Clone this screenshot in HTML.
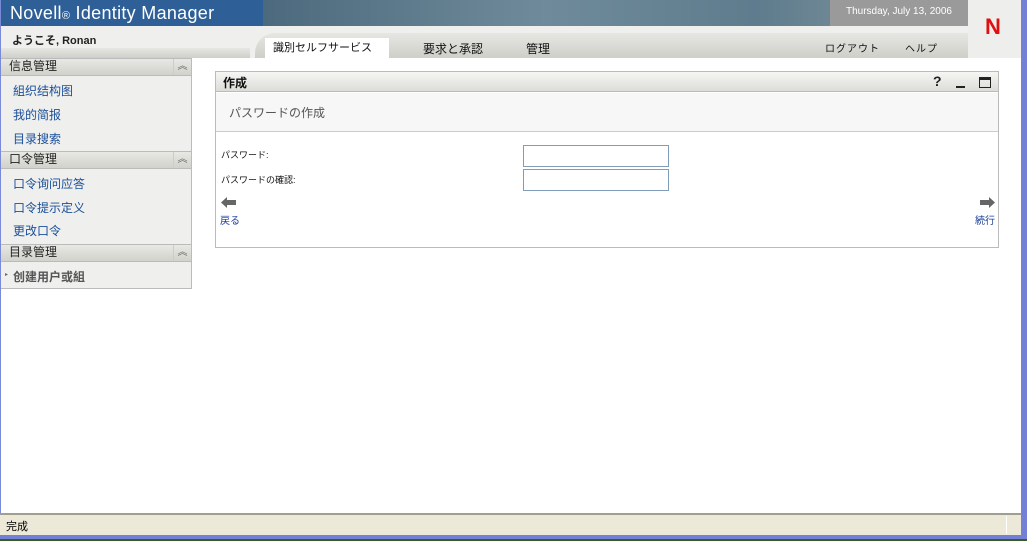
<!DOCTYPE html>
<html><head><meta charset="utf-8"><style>
*{margin:0;padding:0;box-sizing:border-box}
body{width:1027px;height:541px;overflow:hidden;background:#fff;font-family:"Liberation Sans","Noto Sans CJK JP",sans-serif;position:relative}
.abs{position:absolute}
.cjk{font-family:"Liberation Sans","Noto Sans CJK SC",sans-serif}
.sech{background:linear-gradient(#e8e8e4,#d2d2cc);border-top:1px solid #bbb;border-bottom:1px solid #bbb;height:18px;font-size:12px;line-height:15px;color:#222;padding:0 0 0 8px;position:absolute;left:1px;width:190px}
.sech .c{position:absolute;right:0;top:0;width:18px;height:16px;border-left:1px solid #ccc;font-size:10px;color:#666;text-align:center;line-height:16px}
.lnk{position:absolute;left:13px;font-size:12px;color:#1a4f9a}
</style></head><body>
<div class="abs" style="left:0;top:0;width:263px;height:26px;background:#2e5f97"></div>
<div class="abs" style="left:263px;top:0;width:705px;height:26px;background:linear-gradient(90deg,#4c6a7d,#6f8b9b 40%,#5e7c8d 70%,#8a9aa2)"></div>
<div class="abs" style="left:830px;top:0;width:138px;height:26px;background:#9a9a9a"></div>
<div class="abs" style="left:10px;top:3px;font-size:18px;color:#fff;letter-spacing:0.3px">Novell<span style="font-size:11px">®</span> Identity Manager</div>
<div class="abs" style="left:846px;top:6px;font-size:10px;color:#fff">Thursday, July 13, 2006</div>
<div class="abs" style="left:968px;top:0;width:53px;height:58px;background:#eeeeec"></div>
<div class="abs" style="left:985px;top:14px;font-size:22px;font-weight:bold;color:#e01010">N</div>
<div class="abs" style="left:0;top:26px;width:968px;height:32px;background:#efefed"></div>
<div class="abs" style="left:255px;top:33px;width:713px;height:25px;background:linear-gradient(#e6e6e2,#cfcfca);border-radius:20px 0 0 0"></div>
<div class="abs" style="left:0;top:48px;width:250px;height:10px;background:linear-gradient(#e6e6e2,#cfcfca)"></div>
<div class="abs" style="left:12px;top:32px;font-size:11px;font-weight:bold;color:#222">ようこそ, Ronan</div>
<div class="abs" style="left:265px;top:38px;width:124px;height:20px;background:#fff"></div>
<div class="abs" style="left:273px;top:39px;font-size:11px;color:#111">識別セルフサービス</div>
<div class="abs" style="left:423px;top:40px;font-size:12px;color:#111">要求と承認</div>
<div class="abs" style="left:526px;top:40px;font-size:12px;color:#111">管理</div>
<div class="abs" style="left:825px;top:40px;font-size:10px;color:#111;letter-spacing:1px">ログアウト</div>
<div class="abs" style="left:905px;top:40px;font-size:10px;color:#111;letter-spacing:1px">ヘルプ</div>
<div class="abs" style="left:1px;top:58px;width:191px;height:231px;background:#efefed;border-right:1px solid #bbb;border-bottom:1px solid #bbb"></div>
<div class="sech cjk" style="top:58px">信息管理<span class="c">︽</span></div>
<div class="lnk cjk" style="top:82px">組织结构图</div>
<div class="lnk cjk" style="top:106px">我的简报</div>
<div class="lnk cjk" style="top:130px">目录搜索</div>
<div class="sech cjk" style="top:151px">口令管理<span class="c">︽</span></div>
<div class="lnk cjk" style="top:175px">口令询问应答</div>
<div class="lnk cjk" style="top:199px">口令提示定义</div>
<div class="lnk cjk" style="top:222px">更改口令</div>
<div class="sech cjk" style="top:244px">目录管理<span class="c">︽</span></div>
<div class="abs" style="left:5px;top:271px;font-size:6px;color:#666">▸</div>
<div class="abs cjk" style="left:13px;top:268px;font-size:12px;font-weight:bold;color:#555">创建用户或組</div>
<div class="abs" style="left:215px;top:71px;width:784px;height:177px;border:1px solid #bbb;background:#fff"></div>
<div class="abs" style="left:216px;top:72px;width:782px;height:20px;background:linear-gradient(#f6f6f4,#dcdcd8);border-bottom:1px solid #bbb"></div>
<div class="abs" style="left:223px;top:74px;font-size:12px;font-weight:bold;color:#111">作成</div>
<div class="abs" style="left:933px;top:73px;font-size:14px;font-weight:bold;color:#222">?</div>
<div class="abs" style="left:956px;top:86px;width:9px;height:2px;background:#222"></div>
<div class="abs" style="left:979px;top:77px;width:12px;height:11px;border:1px solid #222;border-top-width:3px"></div>
<div class="abs" style="left:216px;top:93px;width:782px;height:39px;background:#f7f7f7;border-bottom:1px solid #ccc"></div>
<div class="abs" style="left:229px;top:104px;font-size:12px;color:#555">パスワードの作成</div>
<div class="abs" style="left:221px;top:148px;font-size:9px;color:#111">パスワード:</div>
<div class="abs" style="left:221px;top:173px;font-size:9px;color:#111">パスワードの確認:</div>
<div class="abs" style="left:523px;top:145px;width:146px;height:22px;border:1px solid #7f9db9"></div>
<div class="abs" style="left:523px;top:169px;width:146px;height:22px;border:1px solid #7f9db9"></div>
<svg class="abs" style="left:221px;top:197px" width="16" height="11"><polygon points="0,5.5 6,0 6,3 15,3 15,8 6,8 6,11" fill="#666"/></svg>
<div class="abs" style="left:220px;top:212px;font-size:10px;color:#1a3f9a">戻る</div>
<svg class="abs" style="left:980px;top:197px" width="16" height="11"><polygon points="15,5.5 9,0 9,3 0,3 0,8 9,8 9,11" fill="#666"/></svg>
<div class="abs" style="left:975px;top:212px;font-size:10px;color:#1a3f9a">続行</div>
<div class="abs" style="left:0;top:0;width:1px;height:541px;background:#7b8ad8"></div>
<div class="abs" style="left:1021px;top:0;width:6px;height:541px;background:#7280d6"></div>
<div class="abs" style="left:0;top:513px;width:1021px;height:2px;background:#a09e8e"></div>
<div class="abs" style="left:0;top:515px;width:1021px;height:20px;background:#ece9d8"></div>
<div class="abs" style="left:6px;top:518px;font-size:11px;color:#000">完成</div>
<div class="abs" style="left:1006px;top:516px;width:1px;height:18px;background:#fff"></div>
<div class="abs" style="left:0;top:535px;width:1027px;height:4px;background:#7280d6"></div>
<div class="abs" style="left:0;top:539px;width:1027px;height:2px;background:#3a5a2a"></div>
</body></html>
